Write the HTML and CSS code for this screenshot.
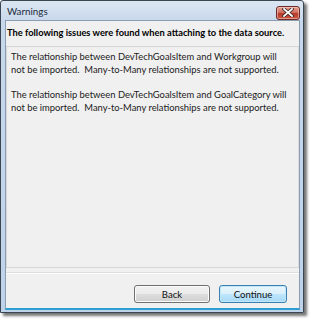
FILE: index.html
```html
<!DOCTYPE html>
<html>
<head>
<meta charset="utf-8">
<link rel="stylesheet" href="styles.css">
</head>
<body>
<div class="window">
  <div class="titlebar">
    <span class="title">Warnings</span>
    <div class="close">
      <svg width="12" height="9" viewBox="0 0 12 9">
        <path d="M2 1 L10 8 M10 1 L2 8" stroke="#3a2020" stroke-width="3.4" stroke-linecap="square"/>
        <path d="M2 1 L10 8 M10 1 L2 8" stroke="#ffffff" stroke-width="1.8" stroke-linecap="square"/>
      </svg>
    </div>
  </div>
  <div class="client">
    <div class="heading">The following issues were found when attaching to the data source.</div>
    <div class="panel">
      <p>The relationship between DevTechGoalsItem and Workgroup will<br>not be imported.&nbsp; Many-to-Many relationships are not supported.</p>
      <p>The relationship between DevTechGoalsItem and GoalCategory will<br>not be imported.&nbsp; Many-to-Many relationships are not supported.</p>
    </div>
    <div class="sep"></div>
    <div class="buttons">
      <div class="btn back">Back</div>
      <div class="btn primary">Continue</div>
    </div>
  </div>
</div>
</body>
</html>
```

FILE: styles.css
```css
html, body {
  margin: 0;
  padding: 0;
  background: #ffffff;
}
body {
  width: 310px;
  height: 319px;
  overflow: hidden;
  font-family: "Lato", "Noto Sans", sans-serif;
  font-size: 9.4px;
  color: #1a1a1a;
}
.window {
  width: 304px;
  height: 313px;
  box-sizing: border-box;
  border: 1px solid #3b4653;
  border-radius: 3px 3px 0 0;
  background: linear-gradient(#dbe6f2, #c8d8eb 20px, #bed2e9);
  box-shadow: 3px 3px 3px rgba(0,0,0,0.55);
  display: flex;
  flex-direction: column;
  padding: 0 3px 2px 4px;
}
.titlebar {
  height: 19px;
  display: flex;
  align-items: center;
  justify-content: space-between;
  flex: none;
}
.title {
  padding-left: 2px;
  font-size: 9.8px;
  color: #1d2c3c;
  line-height: 1;
  margin-top: 2px;
}
.close {
  width: 24px;
  height: 14px;
  margin-top: 4px;
  box-sizing: border-box;
  border: 1px solid #6d2a26;
  border-radius: 3px;
  background: linear-gradient(#e5a093, #d0705f 45%, #b83a2a 55%, #c95a45);
  display: flex;
  align-items: center;
  justify-content: center;
  box-shadow: inset 0 0 0 1px rgba(255,220,210,0.5);
}
.close svg { display: block; }
.client {
  flex: 1;
  background: #f0f0f0;
  border: 1px solid #8a9db4;
  display: flex;
  flex-direction: column;
  border-bottom: 2px solid #2a9fd0;
}
.heading {
  font-weight: bold;
  font-size: 9.3px;
  padding: 5px 0 0 1px;
  height: 21px;
  box-sizing: border-box;
  line-height: 13px;
  color: #000;
  white-space: nowrap;
}
.panel {
  margin: 4px 0 0 0;
  height: 222px;
  box-sizing: border-box;
  border: 1px solid #d6d6d6;
  border-right-color: #dcdcdc;
  padding: 4px 4px 3px;
  line-height: 12.7px;
  color: #222;
  white-space: nowrap;
}
.panel p {
  margin: 0 0 12.7px 0;
}
.sep {
  margin-top: 4px;
  height: 1px;
  background: #ffffff;
  border-top: 1px solid #dedede;
}
.buttons {
  display: flex;
  justify-content: flex-end;
  gap: 9px;
  padding: 11px 12px 0 0;
}
.btn {
  height: 18px;
  box-sizing: border-box;
  border: 1px solid #707070;
  border-radius: 3px;
  display: flex;
  align-items: center;
  justify-content: center;
  color: #111;
  font-size: 9.6px;
  background: linear-gradient(#f2f2f2, #ebebeb 50%, #dddddd 51%, #cfcfcf);
  box-shadow: inset 0 0 0 1px #fbfbfb;
}
.back { width: 76px; }
.primary {
  width: 68px;
  border-color: #3c7fb1;
  background: linear-gradient(#eaf6fd, #d9f0fc 50%, #bee6fd 51%, #a7d9f5);
  box-shadow: inset 0 0 0 1px #bfe8fb;
}
```
